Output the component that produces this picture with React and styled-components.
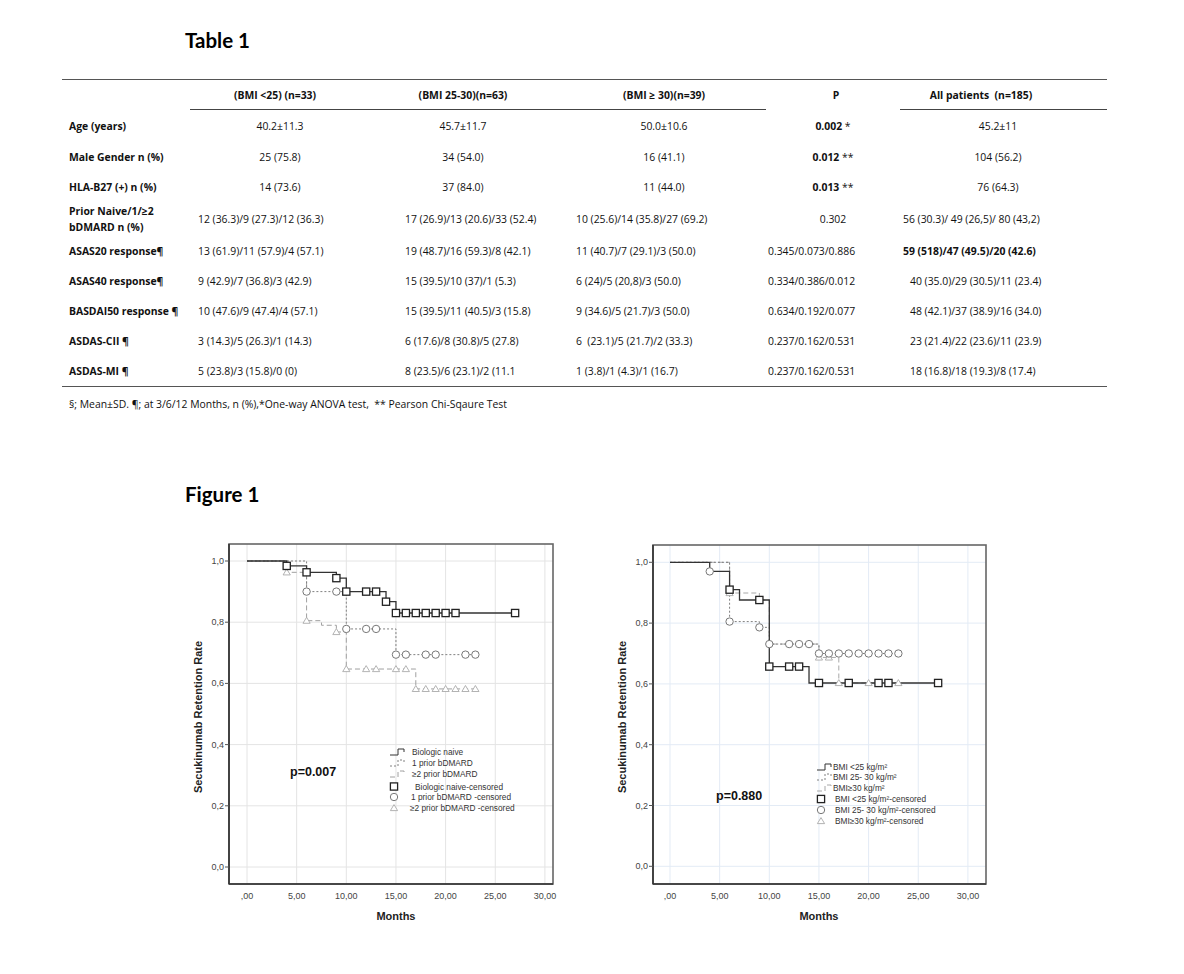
import React from 'react';
import styled, { createGlobalStyle } from 'styled-components';

const GlobalStyle = createGlobalStyle`
  * { box-sizing: border-box; }
  body { margin: 0; background: #fff; font-family: "Open Sans", "Liberation Sans", sans-serif; color: #111; }
`;

const cols = '128px 180px 192px 204px 134px 207px';

const Page = styled.div`
  width: 1184px;
  height: 974px;
  background: #fff;
  overflow: hidden;
`;

const Title = styled.h2`
  margin: 0 0 0 185px;
  padding-top: ${p => p.$top}px;
  font: 700 20.5px/24px Lato, "Liberation Sans", sans-serif;
  color: #000;
`;

const Table = styled.div`
  margin: 27px 0 0 62px;
  width: 1045px;
  font-size: 10.4px;
`;

const Row = styled.div`
  display: grid;
  grid-template-columns: ${cols};
  height: ${p => p.$h}px;
  align-items: ${p => (p.$head ? 'stretch' : 'center')};
  border-top: ${p => (p.$head ? '1.5px solid #555' : 'none')};
  border-bottom: ${p => (p.$last ? '1.5px solid #555' : 'none')};
`;

const HeadCell = styled.div`
  display: flex;
  align-items: center;
  justify-content: center;
  font-weight: 700;
  white-space: pre;
  padding-right: ${p => p.$pr || 0}px;
  padding-left: ${p => p.$pl || 0}px;
  border-bottom: ${p => (p.$rule ? '1.5px solid #444' : 'none')};
`;

const Label = styled.div`
  padding-left: 7px;
  font-weight: 700;
  line-height: 16px;
  white-space: nowrap;
`;

const Cell = styled.div`
  text-align: ${p => p.$align};
  padding-left: ${p => (p.$align === 'left' ? p.$pl : 0)}px;
  padding-right: ${p => (p.$align === 'center' ? p.$pr : 0)}px;
  font-weight: ${p => (p.$bold ? 700 : 400)};
  white-space: pre;
`;

const Strong = styled.b`
  font-weight: 700;
`;

const Footnote = styled.p`
  margin: 10px 0 0 69px;
  font-size: 10.4px;
  line-height: 14px;
  white-space: pre;
`;

const Figures = styled.div`
  display: flex;
  gap: 34px;
  margin: 33px 0 0 180px;
`;

const ChartSvg = styled.svg`
  display: block;
  font-family: "Liberation Sans", Arial, sans-serif;
`;

const head = [
  { t: '' },
  { t: '(BMI <25) (n=33)', rule: true, pr: 10 },
  { t: '(BMI 25-30)(n=63)', rule: true, pr: 6 },
  { t: '(BMI \u2265 30)(n=39)', rule: true },
  { t: 'P', pl: 6 },
  { t: 'All patients  (n=185)', rule: true, pr: 45 },
];

// left padding for left-aligned values, right padding for centred values, per column
const pads = [8, 35, 14, 2, 10];
const prs = [0, 6, 0, 0, 11];

const body = [
  { label: 'Age (years)', h: 32, align: 'center', cells: ['40.2\u00b111.3', '45.7\u00b111.7', '50.0\u00b110.6', ['0.002', ' *'], '45.2\u00b111'] },
  { label: 'Male Gender n (%)', h: 30, align: 'center', cells: ['25 (75.8)', '34 (54.0)', '16 (41.1)', ['0.012', ' **'], '104 (56.2)'] },
  { label: 'HLA-B27 (+) n (%)', h: 30, align: 'center', cells: ['14 (73.6)', '37 (84.0)', '11 (44.0)', ['0.013', ' **'], '76 (64.3)'] },
  { label: ['Prior Naive/1/\u22652', 'bDMARD n (%)'], h: 34, align: 'left', pCenter: true, apPad: 3,
    cells: ['12 (36.3)/9 (27.3)/12 (36.3)', '17 (26.9)/13 (20.6)/33 (52.4)', '10 (25.6)/14 (35.8)/27 (69.2)', '0.302', '56 (30.3)/ 49 (26,5)/ 80 (43,2)'] },
  { label: 'ASAS20 response\u00b6', h: 30, align: 'left', apBold: true, apPad: 3,
    cells: ['13 (61.9)/11 (57.9)/4 (57.1)', '19 (48.7)/16 (59.3)/8 (42.1)', '11 (40.7)/7 (29.1)/3 (50.0)', '0.345/0.073/0.886', '59 (518)/47 (49.5)/20 (42.6)'] },
  { label: 'ASAS40 response\u00b6', h: 30, align: 'left',
    cells: ['9 (42.9)/7 (36.8)/3 (42.9)', '15 (39.5)/10 (37)/1 (5.3)', '6 (24)/5 (20,8)/3 (50.0)', '0.334/0.386/0.012', '40 (35.0)/29 (30.5)/11 (23.4)'] },
  { label: 'BASDAI50 response \u00b6', h: 30, align: 'left',
    cells: ['10 (47.6)/9 (47.4)/4 (57.1)', '15 (39.5)/11 (40.5)/3 (15.8)', '9 (34.6)/5 (21.7)/3 (50.0)', '0.634/0.192/0.077', '48 (42.1)/37 (38.9)/16 (34.0)'] },
  { label: 'ASDAS-CII \u00b6', h: 30, align: 'left',
    cells: ['3 (14.3)/5 (26.3)/1 (14.3)', '6 (17.6)/8 (30.8)/5 (27.8)', '6  (23.1)/5 (21.7)/2 (33.3)', '0.237/0.162/0.531', '23 (21.4)/22 (23.6)/11 (23.9)'] },
  { label: 'ASDAS-MI \u00b6', h: 31, align: 'left',
    cells: ['5 (23.8)/3 (15.8)/0 (0)', '8 (23.5)/6 (23.1)/2 (11.1', '1 (3.8)/1 (4.3)/1 (16.7)', '0.237/0.162/0.531', '18 (16.8)/18 (19.3)/8 (17.4)'] },
];

function BodyRow({ row, last }) {
  return (
    <Row $h={row.h} $last={last}>
      <Label>{Array.isArray(row.label) ? row.label.map(l => <div key={l}>{l}</div>) : row.label}</Label>
      {row.cells.map((c, i) => {
        const align = i === 3 && row.pCenter ? 'center' : row.align;
        const pl = i === 4 && row.apPad !== undefined ? row.apPad : pads[i];
        return (
          <Cell key={i} $align={align} $pl={pl} $pr={prs[i]} $bold={i === 4 && row.apBold}>
            {Array.isArray(c) ? <><Strong>{c[0]}</Strong>{c[1]}</> : c}
          </Cell>
        );
      })}
    </Row>
  );
}

const months = [0, 5, 10, 15, 20, 25, 30];
const monthLabels = [',00', '5,00', '10,00', '15,00', '20,00', '25,00', '30,00'];
const rates = [0, 0.2, 0.4, 0.6, 0.8, 1.0];

const left = {
  frame: [49, 5, 373, 345], x0: 67, dx: 9.93, yZero: 328, yUnit: 306, grid: '#e4e4e4',
  p: { x: 110, y: 237, t: 'p=0.007' },
  legend: { sx: 210, tx: 232, ys: [213, 224, 235, 247.5, 258, 269] },
  labels: ['Biologic naive', '1 prior bDMARD', '\u22652 prior bDMARD', 'Biologic naive-censored', '1 prior bDMARD -censored', '\u22652  prior bDMARD -censored'],
  legendShift: [0, 0, 0, 1, -3, -4],
  series: [
    { kind: 'tri', dash: '5 3', color: '#a0a0a0', end: 23,
      steps: [[4, 0.963], [6, 0.805], [7.5, 0.79], [9, 0.768], [10, 0.647], [17, 0.582]],
      marks: [[4, 0.963], [6, 0.805], [9, 0.768], [10, 0.647], [12, 0.647], [13, 0.647], [15, 0.647], [16, 0.647], [17, 0.582], [18, 0.582], [19, 0.582], [20, 0.582], [21, 0.582], [22, 0.582], [23, 0.582]] },
    { kind: 'circ', dash: '2 2', color: '#808080', end: 23,
      steps: [[6, 0.9], [10, 0.778], [15, 0.694]],
      marks: [[6, 0.9], [9, 0.9], [10, 0.778], [12, 0.778], [13, 0.778], [15, 0.694], [16, 0.694], [18, 0.694], [19, 0.694], [22, 0.694], [23, 0.694]] },
    { kind: 'sq', dash: null, color: '#333', end: 27,
      steps: [[4, 0.984], [6, 0.963], [9, 0.944], [10, 0.9], [14, 0.867], [15, 0.83]],
      marks: [[4, 0.984], [6, 0.963], [9, 0.944], [10, 0.9], [12, 0.9], [13, 0.9], [14, 0.867], [15, 0.83], [16, 0.83], [17, 0.83], [18, 0.83], [19, 0.83], [20, 0.83], [21, 0.83], [27, 0.83]] },
  ],
};

const right = {
  frame: [49, 6, 382, 345], x0: 66, dx: 9.93, yZero: 327.3, yUnit: 304, grid: '#e3ebf5',
  p: { x: 112, y: 261, t: 'p=0.880' },
  legend: { sx: 213, tx: 229, ys: [228, 238, 249, 260, 271, 282] },
  labels: ['BMI <25 kg/m\u00b2', 'BMI 25- 30 kg/m\u00b2', 'BMI\u226530 kg/m\u00b2', 'BMI <25 kg/m\u00b2-censored', 'BMI 25- 30 kg/m\u00b2-censored', 'BMI\u226530 kg/m\u00b2-censored'],
  legendShift: [0, 0, 0, 0, 0, 0],
  series: [
    { kind: 'tri', dash: '5 3', color: '#a8a8a8', end: 23,
      steps: [[6, 0.899], [9, 0.876], [10, 0.731], [15, 0.687], [17, 0.603]],
      marks: [[6, 0.899], [9, 0.876], [15, 0.687], [16, 0.687], [17, 0.603], [20, 0.603], [23, 0.603]] },
    { kind: 'circ', dash: '2 2', color: '#808080', end: 23,
      steps: [[6, 0.805], [9, 0.786], [10, 0.731], [15, 0.7]],
      marks: [[4, 0.97], [6, 0.805], [9, 0.786], [10, 0.731], [12, 0.731], [13, 0.731], [14, 0.731], [15, 0.7], [16, 0.7], [17, 0.7], [18, 0.7], [19, 0.7], [20, 0.7], [21, 0.7], [22, 0.7], [23, 0.7]] },
    { kind: 'sq', dash: null, color: '#333', end: 27,
      steps: [[4, 0.97], [6, 0.91], [7, 0.876], [10, 0.657], [14, 0.603]],
      marks: [[6, 0.91], [9, 0.876], [10, 0.657], [12, 0.657], [13, 0.657], [15, 0.603], [18, 0.603], [21, 0.603], [22, 0.603], [27, 0.603]] },
  ],
};

function Marker({ kind, x, y }) {
  if (kind === 'sq') return <rect x={x - 3.6} y={y - 3.6} width={7.2} height={7.2} fill="#fff" stroke="#222" strokeWidth={1.3} />;
  if (kind === 'circ') return <circle cx={x} cy={y} r={3.7} fill="#fff" stroke="#777" strokeWidth={1} />;
  return <polygon points={`${x},${y - 3.4} ${x - 3.6},${y + 2.6} ${x + 3.6},${y + 2.6}`} fill="#fff" stroke="#aaa" strokeWidth={0.9} />;
}

function LegendSwatch({ dash, color, x, y }) {
  return (
    <path d={`M${x},${y + 3} H${x + 8} V${y - 3} H${x + 14} V${y}`} fill="none" stroke={color} strokeWidth={1} strokeDasharray={dash || undefined} />
  );
}

function Chart({ cfg }) {
  const X = m => cfg.x0 + m * cfg.dx;
  const Y = v => cfg.yZero - v * cfg.yUnit;
  const [fx0, fy0, fx1, fy1] = cfg.frame;
  const stepPath = s => {
    let d = `M${X(0)},${Y(1)}`;
    s.steps.forEach(([m, v]) => { d += ` H${X(m)} V${Y(v)}`; });
    return d + ` H${X(s.end)}`;
  };
  const { sx, tx, ys } = cfg.legend;
  return (
    <ChartSvg width={390} height={390} viewBox="0 0 390 390">
      {months.map(m => <line key={'gx' + m} x1={X(m)} x2={X(m)} y1={fy0} y2={fy1} stroke={cfg.grid} strokeWidth={1} />)}
      {rates.map(v => <line key={'gy' + v} x1={fx0} x2={fx1} y1={Y(v)} y2={Y(v)} stroke={cfg.grid} strokeWidth={1} />)}
      <rect x={fx0} y={fy0} width={fx1 - fx0} height={fy1 - fy0} fill="none" stroke="#666" strokeWidth={1.6} />
      <line x1={fx0} x2={fx0} y1={fy0} y2={fy1} stroke="#333" strokeWidth={1.6} />
      <line x1={fx0} x2={fx1} y1={fy1} y2={fy1} stroke="#333" strokeWidth={1.6} />
      {rates.map(v => (
        <g key={'ty' + v}>
          <line x1={fx0 - 4} x2={fx0} y1={Y(v)} y2={Y(v)} stroke="#555" strokeWidth={1} />
          <text x={fx0 - 5} y={Y(v) + 3} fontSize={9} fill="#444" textAnchor="end">{v.toFixed(1).replace('.', ',')}</text>
        </g>
      ))}
      {months.map((m, i) => (
        <text key={'tx' + m} x={X(m)} y={360} fontSize={9} fill="#444" textAnchor="middle">{monthLabels[i]}</text>
      ))}
      <text x={X(15)} y={381} fontSize={11} fontWeight={700} fill="#222" textAnchor="middle">Months</text>
      <text transform="translate(22,178) rotate(-90)" fontSize={11} fontWeight={700} fill="#222" textAnchor="middle">Secukinumab Retention Rate</text>
      {cfg.series.map(s => (
        <path key={'p' + s.kind} d={stepPath(s)} fill="none" stroke={s.color} strokeWidth={s.dash ? 1 : 1.3} strokeDasharray={s.dash || undefined} />
      ))}
      {cfg.series.map(s => s.marks.map(([m, v], i) => <Marker key={s.kind + i} kind={s.kind} x={X(m)} y={Y(v)} />))}
      <text x={cfg.p.x} y={cfg.p.y} fontSize={12.5} fontWeight={700} fill="#111">{cfg.p.t}</text>
      {cfg.series.slice().reverse().map((s, i) => (
        <LegendSwatch key={'ls' + i} dash={s.dash} color={s.color} x={sx} y={ys[i]} />
      ))}
      {cfg.series.slice().reverse().map((s, i) => (
        <Marker key={'lm' + i} kind={s.kind} x={sx + 4} y={ys[i + 3]} />
      ))}
      {cfg.labels.map((l, i) => (
        <text key={'lt' + i} x={tx + (i >= 3 ? 2 : 0) + cfg.legendShift[i]} y={ys[i] + 3} fontSize={8.3} fill="#333">{l}</text>
      ))}
    </ChartSvg>
  );
}

export default function App() {
  return (
    <Page>
      <GlobalStyle />
      <Title $top={28}>Table 1</Title>
      <Table>
        <Row $head $h={31}>
          {head.map((h, i) => (
            <HeadCell key={i} $rule={h.rule} $pr={h.pr} $pl={h.pl}>{h.t}</HeadCell>
          ))}
        </Row>
        {body.map((r, i) => <BodyRow key={i} row={r} last={i === body.length - 1} />)}
      </Table>
      <Footnote>{'\u00a7; Mean\u00b1SD. \u00b6; at 3/6/12 Months, n (%),*One-way ANOVA test,  ** Pearson Chi-Sqaure Test'}</Footnote>
      <Title $top={71}>Figure 1</Title>
      <Figures>
        <Chart cfg={left} />
        <Chart cfg={right} />
      </Figures>
    </Page>
  );
}
